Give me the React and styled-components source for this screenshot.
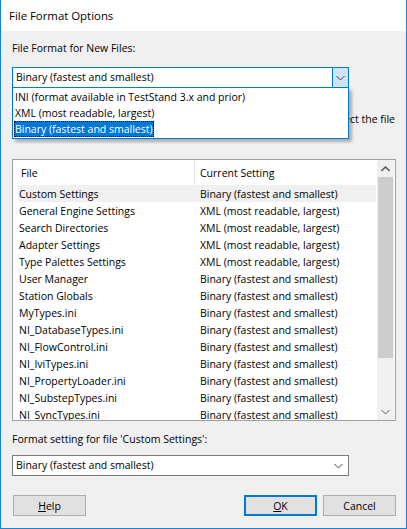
import styled, { createGlobalStyle } from "styled-components";

const Global = createGlobalStyle`
  html, body { margin: 0; padding: 0; background: #f0f0f0; }
  body { font-family: "Open Sans", "Noto Sans", sans-serif; font-size: 10.5px; color: #000; }
  * { box-sizing: border-box; }
`;

const Win = styled.div`
  width: 407px;
  height: 529px;
  display: flex;
  flex-direction: column;
  background: #f0f0f0;
  border: 1px solid #1883d7;
  border-top: none;
  overflow: hidden;
`;

const TitleBar = styled.div`
  height: 31px;
  background: #fff;
  display: flex;
  align-items: center;
  padding-left: 8px;
  font-size: 11.4px;
`;

const Body = styled.div`
  display: flex;
  flex-direction: column;
  padding: 0 10px 0 11px;
`;

const Label = styled.div`
  height: 16px;
  line-height: 16px;
  margin-top: ${(p) => p.top}px;
  white-space: nowrap;
`;

const ComboWrap = styled.div`
  position: relative;
  width: 337px;
  margin-top: ${(p) => p.top}px;
`;

const Combo = styled.div`
  height: 21px;
  display: flex;
  align-items: center;
  background: #fff;
  border: 1px solid ${(p) => (p.open ? "#0078d7" : "#7a7a7a")};
`;

const ComboText = styled.div`
  flex: 1;
  padding-left: 3px;
  line-height: 19px;
  white-space: nowrap;
`;

const DropBtn = styled.div`
  width: 16px;
  height: 19px;
  display: flex;
  align-items: center;
  justify-content: center;
  background: ${(p) => (p.open ? "#cce4f7" : "transparent")};
  border-left: ${(p) => (p.open ? "1px solid #0078d7" : "none")};
  margin-right: ${(p) => (p.open ? 0 : 2)}px;
`;

const DropList = styled.div`
  position: absolute;
  top: 100%;
  left: 0;
  width: 100%;
  margin-top: -1px;
  background: #fff;
  border: 1px solid #0078d7;
  box-shadow: 3px 3px 3px rgba(0, 0, 0, 0.28);
  padding: 1px 0 1px 1px;
  z-index: 2;
`;

const DropItem = styled.div`
  height: 16px;
  line-height: 16px;
  white-space: nowrap;
  span {
    display: inline-block;
    padding: 0 1px;
    background: ${(p) => (p.sel ? "#0078d7" : "transparent")};
    color: ${(p) => (p.sel ? "#fff" : "#000")};
    outline: ${(p) => (p.sel ? "1px dotted #000" : "none")};
    outline-offset: -1px;
  }
`;

const Desc = styled.div`
  margin-top: 23px;
  height: 16px;
  line-height: 16px;
  white-space: nowrap;
  display: flex;
  justify-content: flex-end;
  padding-right: 1px;
  overflow: hidden;
`;

const List = styled.div`
  margin-top: 32px;
  width: 384px;
  height: 262px;
  border: 1px solid #a0a0a0;
  background: #fff;
  display: flex;
  overflow: hidden;
`;

const ListMain = styled.div`
  flex: 1;
  display: flex;
  flex-direction: column;
  padding-left: 5px;
  overflow: hidden;
`;

const Head = styled.div`
  height: 25px;
  display: flex;
  flex-shrink: 0;
`;

const HeadCell = styled.div`
  width: ${(p) => p.w}px;
  padding-left: ${(p) => p.pl}px;
  display: flex;
  align-items: center;
  border-right: ${(p) => (p.div ? "1px solid #e5e5e5" : "none")};
`;

const Row = styled.div`
  height: 17px;
  flex-shrink: 0;
  display: flex;
  align-items: center;
  width: 358px;
  background: ${(p) => (p.sel ? "#f0f0f0" : "transparent")};
  white-space: nowrap;
`;

const Cell = styled.div`
  width: ${(p) => p.w}px;
  padding-left: ${(p) => p.pl}px;
  overflow: hidden;
`;

const Scroll = styled.div`
  width: 17px;
  background: #f0f0f0;
  display: flex;
  flex-direction: column;
  align-items: center;
  margin-right: 1px;
`;

const ScrollArrow = styled.div`
  height: 17px;
  width: 17px;
  display: flex;
  align-items: center;
  justify-content: center;
`;

const Thumb = styled.div`
  width: 15px;
  height: 181px;
  background: #cdcdcd;
`;

const ScrollGap = styled.div`
  flex: 1;
`;

const Buttons = styled.div`
  margin-top: 19px;
  display: flex;
  padding-left: 1px;
`;

const Btn = styled.div`
  width: 73px;
  height: 21px;
  display: flex;
  align-items: center;
  justify-content: center;
  background: #e1e1e1;
  border: ${(p) => (p.def ? "2px solid #0078d7" : "1px solid #adadad")};
  margin-left: ${(p) => p.ml || 0}px;
  u { text-decoration: underline; }
`;

const Chevron = ({ up, color = "#606060" }) => (
  <svg width="9" height="6" viewBox="0 0 9 6">
    <path
      d={up ? "M0.5 5 L4.5 1 L8.5 5" : "M0.5 1 L4.5 5 L8.5 1"}
      fill="none"
      stroke={color}
      strokeWidth={up ? 1.6 : 1}
    />
  </svg>
);

const rows = [
  ["Custom Settings", "Binary (fastest and smallest)"],
  ["General Engine Settings", "XML (most readable, largest)"],
  ["Search Directories", "XML (most readable, largest)"],
  ["Adapter Settings", "XML (most readable, largest)"],
  ["Type Palettes Settings", "XML (most readable, largest)"],
  ["User Manager", "Binary (fastest and smallest)"],
  ["Station Globals", "Binary (fastest and smallest)"],
  ["MyTypes.ini", "Binary (fastest and smallest)"],
  ["NI_DatabaseTypes.ini", "Binary (fastest and smallest)"],
  ["NI_FlowControl.ini", "Binary (fastest and smallest)"],
  ["NI_IviTypes.ini", "Binary (fastest and smallest)"],
  ["NI_PropertyLoader.ini", "Binary (fastest and smallest)"],
  ["NI_SubstepTypes.ini", "Binary (fastest and smallest)"],
  ["NI_SyncTypes.ini", "Binary (fastest and smallest)"],
];

const options = [
  "INI (format available in TestStand 3.x and prior)",
  "XML (most readable, largest)",
  "Binary (fastest and smallest)",
];

export default function App() {
  return (
    <>
      <Global />
      <Win>
        <TitleBar>File Format Options</TitleBar>
        <Body>
          <Label top={9}>File Format for New Files:</Label>
          <ComboWrap top={11}>
            <Combo open>
              <ComboText>Binary (fastest and smallest)</ComboText>
              <DropBtn open>
                <Chevron color="#404040" />
              </DropBtn>
            </Combo>
            <DropList>
              {options.map((o, i) => (
                <DropItem key={o} sel={i === 2}>
                  <span>{o}</span>
                </DropItem>
              ))}
            </DropList>
          </ComboWrap>
          <Desc>
            <span>To change the format of a file listed below, select the file</span>
          </Desc>
          <List>
            <ListMain>
              <Head>
                <HeadCell w={177} pl={3} div>
                  File
                </HeadCell>
                <HeadCell w={180} pl={5}>
                  Current Setting
                </HeadCell>
              </Head>
              {rows.map(([f, s], i) => (
                <Row key={f} sel={i === 0}>
                  <Cell w={182} pl={1}>
                    {f}
                  </Cell>
                  <Cell w={176} pl={0}>
                    {s}
                  </Cell>
                </Row>
              ))}
            </ListMain>
            <Scroll>
              <ScrollArrow>
                <Chevron up />
              </ScrollArrow>
              <Thumb />
              <ScrollGap />
              <ScrollArrow>
                <Chevron />
              </ScrollArrow>
            </Scroll>
          </List>
          <Label top={10}>Format setting for file 'Custom Settings':</Label>
          <ComboWrap top={8}>
            <Combo>
              <ComboText>Binary (fastest and smallest)</ComboText>
              <DropBtn>
                <Chevron color="#404040" />
              </DropBtn>
            </Combo>
          </ComboWrap>
          <Buttons>
            <Btn>
              <span>
                <u>H</u>elp
              </span>
            </Btn>
            <Btn def ml={158}>
              <span>
                <u>O</u>K
              </span>
            </Btn>
            <Btn ml={6}>Cancel</Btn>
          </Buttons>
        </Body>
      </Win>
    </>
  );
}
